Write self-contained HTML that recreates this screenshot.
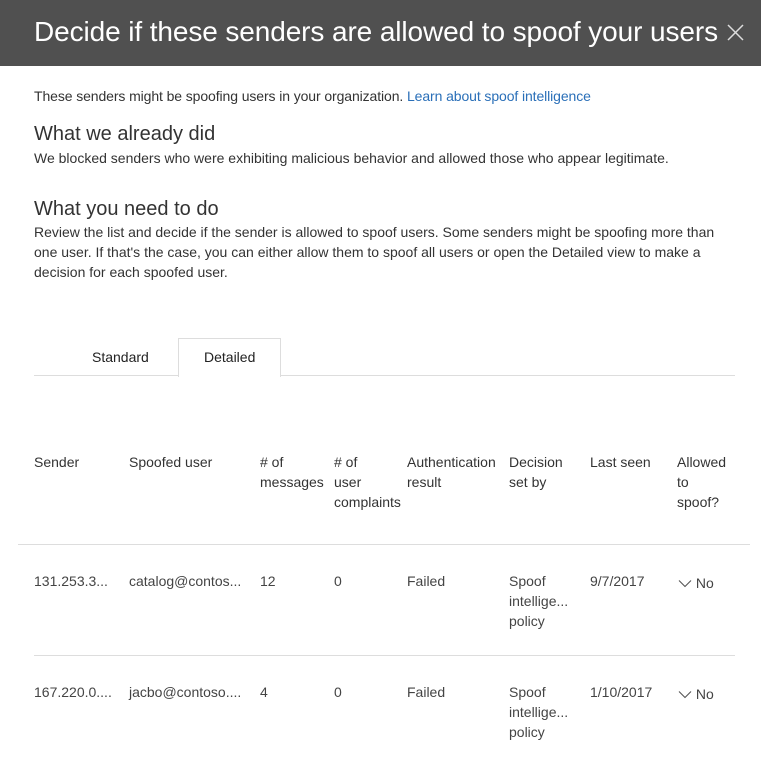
<!DOCTYPE html>
<html><head><meta charset="utf-8"><style>
body{margin:0;width:761px;height:757px;overflow:hidden;background:#fff;font-family:"Liberation Sans",sans-serif;color:#333;position:relative}
.a{position:absolute;white-space:nowrap}
.h{top:0;left:0;width:761px;height:66px;background:#505050}
.t{font-size:14px;line-height:20px}
.c{font-size:14px;line-height:20px;color:#444}
.line{position:absolute;height:1px;background:#ddd}
</style></head><body>
<div class="a h"></div>
<div class="a" style="left:34px;top:13px;font-size:28px;color:#fff;line-height:38px;letter-spacing:-0.1px">Decide if these senders are allowed to spoof your users</div>
<svg class="a" style="left:727px;top:24px" width="17" height="17" viewBox="0 0 17 17"><path d="M1 1L16 16M16 1L1 16" stroke="#ddd" stroke-width="1.5"/></svg>
<div class="a t" style="left:34px;top:86px;letter-spacing:-0.1px">These senders might be spoofing users in your organization. <span style="color:#2a6fb8">Learn about spoof intelligence</span></div>
<div class="a" style="left:34px;top:121px;font-size:20px;line-height:26px;color:#333">What we already did</div>
<div class="a t" style="left:34px;top:148px">We blocked senders who were exhibiting malicious behavior and allowed those who appear legitimate.</div>
<div class="a" style="left:34px;top:196px;font-size:20px;line-height:26px;color:#333">What you need to do</div>
<div class="a t" style="left:34px;top:222px;white-space:normal;width:685px">Review the list and decide if the sender is allowed to spoof users. Some senders might be spoofing more than one user. If that's the case, you can either allow them to spoof all users or open the Detailed view to make a decision for each spoofed user.</div>
<div class="line" style="left:34px;top:375px;width:701px"></div>
<div class="a" style="left:178px;top:338px;width:101px;height:38px;border:1px solid #ddd;border-bottom:none;background:#fff"></div>
<div class="a t" style="left:92px;top:347px;color:#222">Standard</div>
<div class="a t" style="left:204px;top:347px;color:#222">Detailed</div>
<div class="a t" style="left:34px;top:452px">Sender</div>
<div class="a t" style="left:129px;top:452px">Spoofed user</div>
<div class="a t" style="left:260px;top:452px"># of<br>messages</div>
<div class="a t" style="left:334px;top:452px"># of<br>user<br>complaints</div>
<div class="a t" style="left:407px;top:452px">Authentication<br>result</div>
<div class="a t" style="left:509px;top:452px">Decision<br>set by</div>
<div class="a t" style="left:590px;top:452px">Last seen</div>
<div class="a t" style="left:677px;top:452px">Allowed<br>to<br>spoof?</div>
<div class="line" style="left:18px;top:544px;width:732px"></div>
<div class="a c" style="left:34px;top:571px">131.253.3...</div>
<div class="a c" style="left:129px;top:571px">catalog@contos...</div>
<div class="a c" style="left:260px;top:571px">12</div>
<div class="a c" style="left:334px;top:571px">0</div>
<div class="a c" style="left:407px;top:571px">Failed</div>
<div class="a c" style="left:509px;top:571px">Spoof<br>intellige...<br>policy</div>
<div class="a c" style="left:590px;top:571px">9/7/2017</div>
<div class="a c" style="left:678px;top:573px"><svg width="14" height="9" viewBox="0 0 14 9"><path d="M1 1.5L7 7.5L13 1.5" stroke="#555" fill="none" stroke-width="1.1"/></svg> No</div>
<div class="line" style="left:34px;top:655px;width:701px"></div>
<div class="a c" style="left:34px;top:682px">167.220.0....</div>
<div class="a c" style="left:129px;top:682px">jacbo@contoso....</div>
<div class="a c" style="left:260px;top:682px">4</div>
<div class="a c" style="left:334px;top:682px">0</div>
<div class="a c" style="left:407px;top:682px">Failed</div>
<div class="a c" style="left:509px;top:682px">Spoof<br>intellige...<br>policy</div>
<div class="a c" style="left:590px;top:682px">1/10/2017</div>
<div class="a c" style="left:678px;top:684px"><svg width="14" height="9" viewBox="0 0 14 9"><path d="M1 1.5L7 7.5L13 1.5" stroke="#555" fill="none" stroke-width="1.1"/></svg> No</div>
</body></html>
